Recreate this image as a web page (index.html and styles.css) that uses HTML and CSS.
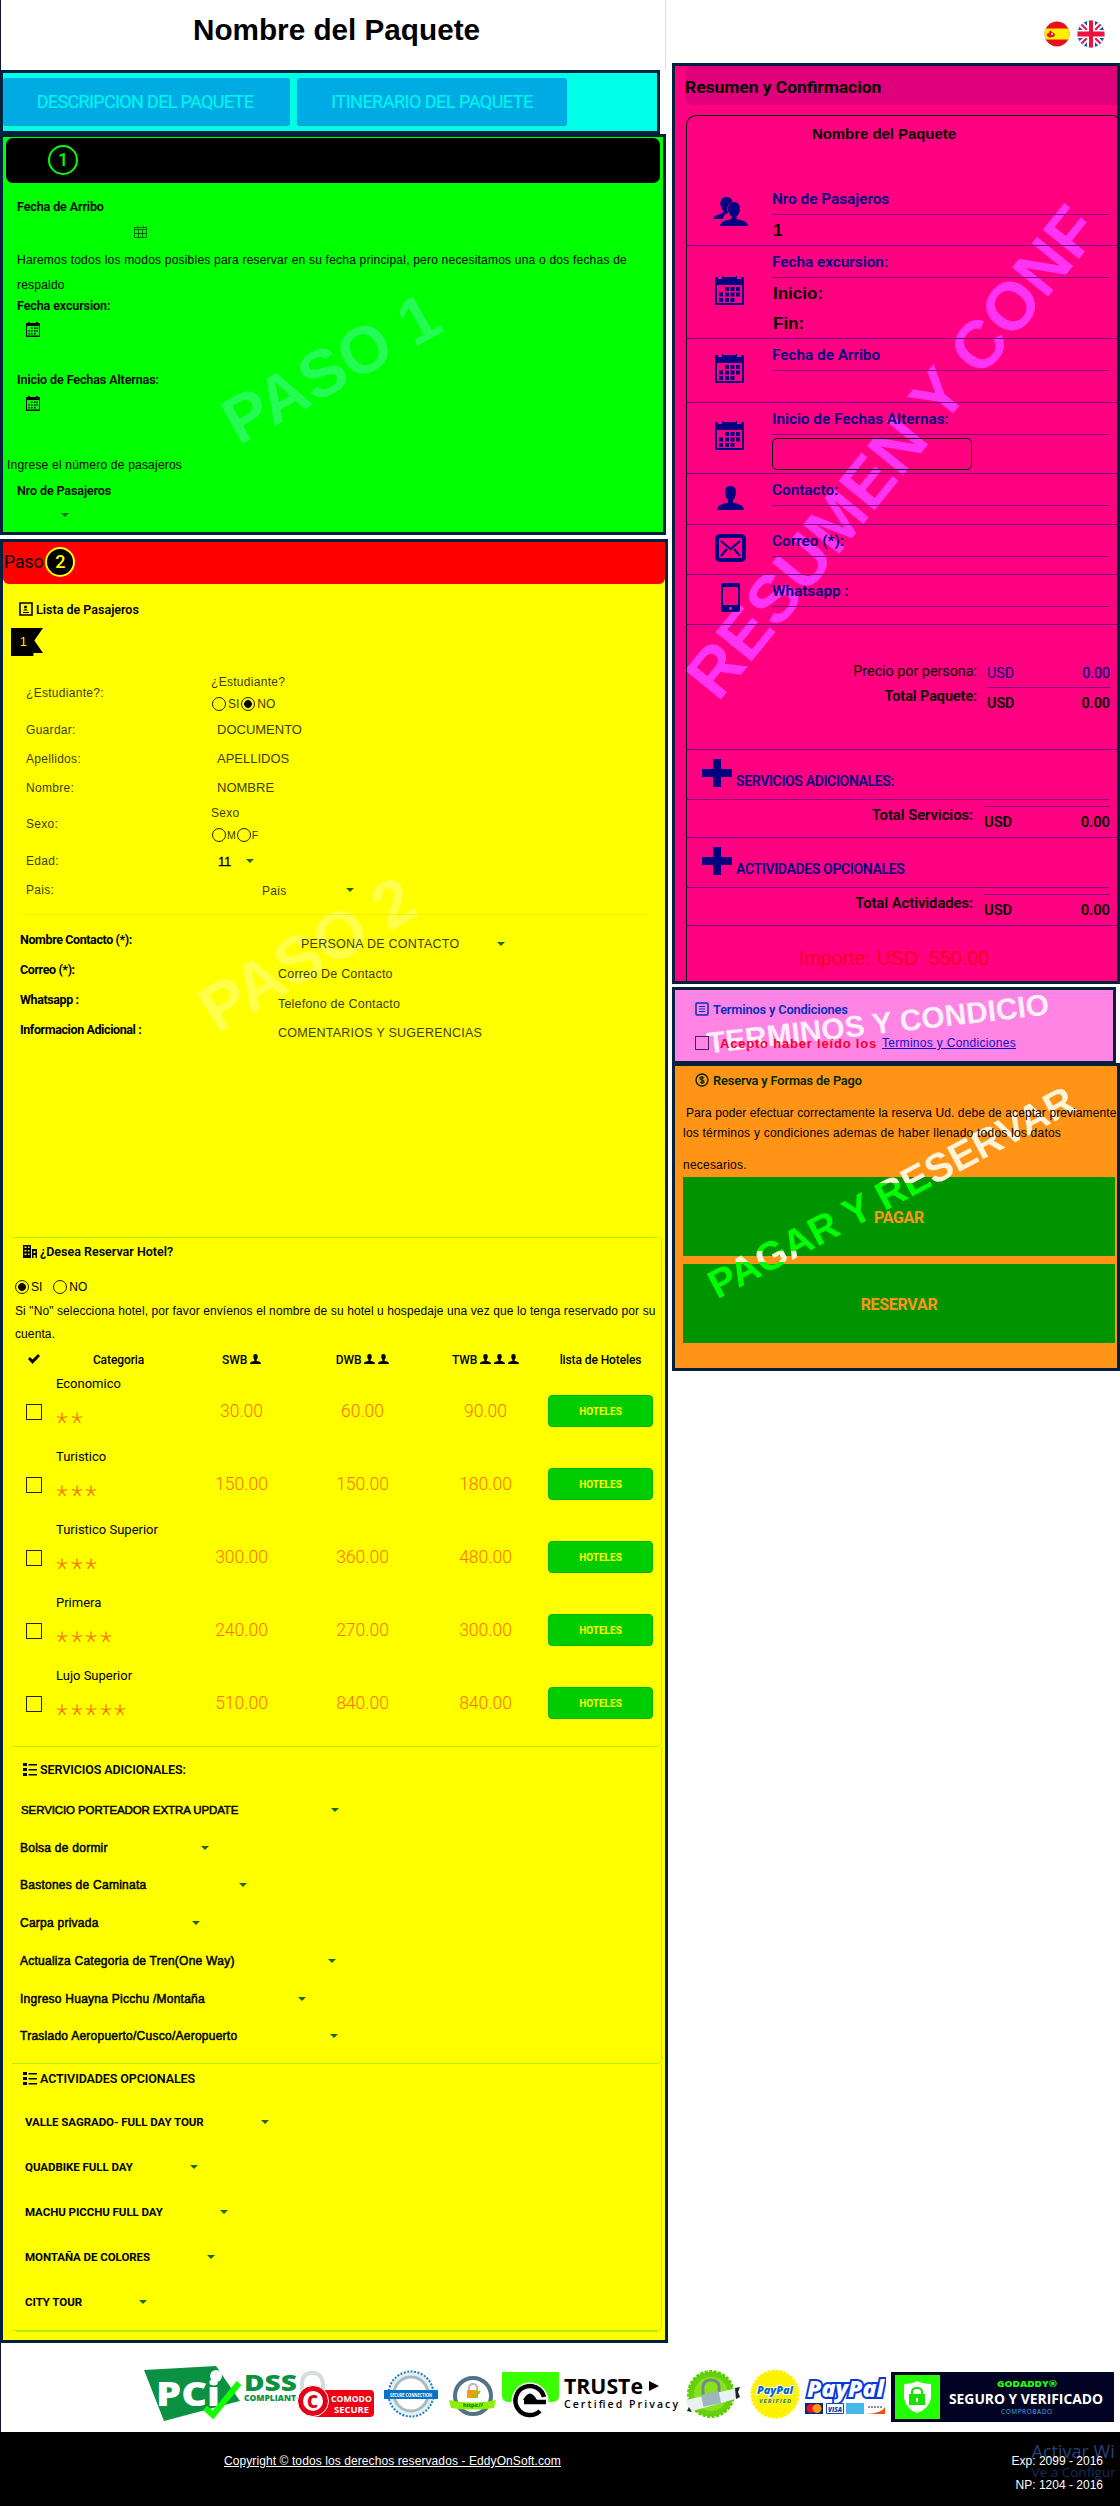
FILE: index.html
```html
<!DOCTYPE html>
<html lang="es">
<head>
<meta charset="utf-8">
<title>Nombre del Paquete</title>
<link rel="stylesheet" href="styles.css">
</head>
<body>
<svg class="sprite" width="0" height="0">
  <defs>
    <symbol id="calendar" viewBox="0 0 29 29"><path d="M0 1h3v2h4V0h1v1h13V0h1v3h4V1h3v28H0zM2 9v18h25V9z" fill-rule="evenodd"/><path d="M10 11h4v4h-4zM15.500 11h4v4h-4zM21 11h4v4h-4zM4 16.500h4v4H4zM10 16.500h4v4h-4zM15.500 16.500h4v4h-4zM21 16.500h4v4h-4zM4 22h4v4H4zM10 22h4v4h-4zM15.500 22h4v4h-4z"/></symbol>
    <symbol id="calendar-s" viewBox="0 0 14 15"><path d="M0 1h2V0h2v1h6V0h2v1h2v14H0zM1 4v9.500h12V4z" fill-rule="evenodd"/><path d="M5 5.500h1.500V7H5zM8 5.500h1.500V7H8zM10.500 5.500H12V7h-1.500zM2.500 8.200H4v1.500H2.500zM5 8.200h1.500v1.500H5zM8 8.200h1.500v1.500H8zM10.500 8.200H12v1.500h-1.500zM2.500 11H4v1.500H2.500zM5 11h1.500v1.500H5zM8 11h1.500v1.500H8z"/></symbol>
    <symbol id="person" viewBox="0 0 27 24"><path d="M13.500 0c3.500 0 5.500 2 5.500 6 0 4-1.600 6.500-3 8v2.500c4 1.500 11 2 11 7.500H0c0-5.500 7-6 11-7.500V14c-1.400-1.500-3-4-3-8 0-4 2-6 5.500-6z"/></symbol>
    <symbol id="star" viewBox="0 0 12 12"><path d="M6 6V.5M6 6L.8 4.500M6 6l5.200-1.500M6 6l-3.300 4.800M6 6l3.300 4.800" fill="none" stroke="currentColor" stroke-width="1.300"/></symbol>
    <symbol id="list" viewBox="0 0 14 13"><path d="M0 0h4v3H0zM0 5h4v3H0zM0 10h4v3H0zM5.500 1H14v1.500H5.500zM5.500 6H14v1.500H5.500zM5.500 11H14v1.500H5.500z"/></symbol>
    <symbol id="plus" viewBox="0 0 30 28"><path d="M11 0h8v10h11v8H19v10h-8V18H0v-8h11z"/></symbol>
  </defs>
</svg>

<div class="page">
  <div class="left">
    <h1 class="title">Nombre del Paquete</h1>
    <nav class="tabs">
      <a class="tab tab-desc">DESCRIPCION DEL PAQUETE</a>
      <a class="tab tab-itin">ITINERARIO DEL PAQUETE</a>
    </nav>

    <section class="step1">
      <div class="mark mark-1">PASO 1</div>
      <header class="step1-head"><span class="num">1</span></header>
      <div class="line t13"><b class="label">Fecha de Arribo</b></div>
      <div class="line t5"><svg class="cal-thin" width="13" height="13" viewBox="0 0 13 13"><path d="M.5 2.500h12v10H.5zM.5 4.500h12M4.500 4.500v8M8.500 4.500v8M3.500.500v3M9.500.500v3M.5 8.500h12" fill="none" stroke="#040" stroke-width=".8"/></svg></div>
      <div class="line t9"><span class="note">Haremos todos los modos posibles para reservar en su fecha principal, pero necesitamos una o dos fechas de</span></div>
      <div class="line t5"><span class="note">respaldo</span></div>
      <div class="line"><b class="label">Fecha excursion:</b></div>
      <div class="line t4 ind"><svg width="14" height="15"><use href="#calendar-s"/></svg></div>
      <div class="line t30"><b class="label">Inicio de Fechas Alternas:</b></div>
      <div class="line t4 ind"><svg width="14" height="15"><use href="#calendar-s"/></svg></div>
      <div class="line t41 out"><span class="note">Ingrese el número de pasajeros</span></div>
      <div class="line t5"><b class="label">Nro de Pasajeros</b></div>
      <div class="line t5"><i class="caret caret-n"></i></div>
    </section>

    <section class="step2">
      <div class="mark mark-2">PASO 2</div>
      <header class="step2-head">Paso<span class="num num-2">2</span></header>
      <h2 class="sub sub-list"><svg width="14" height="14" viewBox="0 0 14 14"><path d="M1 1h12v12H1z" fill="none" stroke="#000" stroke-width="1.600"/><circle cx="6.500" cy="5" r="1.500"/><path d="M4 8.500q2.500-3 5 0zM4 10h6v1H4z"/></svg>Lista de Pasajeros</h2>
      <div class="flag"><span>1</span></div>
      <div class="form">
        <div class="row tall"><label>¿Estudiante?:</label><div><p>¿Estudiante?</p><p class="radios"><i class="radio"></i>SI<i class="radio on"></i>NO</p></div></div>
        <div class="row"><label>Guardar:</label><span class="field">DOCUMENTO</span></div>
        <div class="row"><label>Apellidos:</label><span class="field">APELLIDOS</span></div>
        <div class="row"><label>Nombre:</label><span class="field">NOMBRE</span></div>
        <div class="row tall"><label>Sexo:</label><div><p>Sexo</p><p class="radios small"><i class="radio"></i>M<i class="radio"></i>F</p></div></div>
        <div class="row"><label>Edad:</label><span class="age">11</span><i class="caret"></i></div>
        <div class="row"><label>Pais:</label><span class="country">Pais</span><i class="caret"></i></div>
      </div>
      <div class="contact">
        <div class="crow"><b>Nombre Contacto (*):</b><span class="in1">PERSONA DE CONTACTO</span><i class="caret"></i></div>
        <div class="crow"><b>Correo (*):</b><span class="in2">Correo De Contacto</span></div>
        <div class="crow"><b>Whatsapp :</b><span class="in2">Telefono de Contacto</span></div>
        <div class="crow"><b>Informacion Adicional :</b><span class="in3">COMENTARIOS Y SUGERENCIAS</span></div>
      </div>

      <div class="hotel">
        <h2 class="sub"><svg width="14" height="13" viewBox="0 0 14 13"><path d="M0 0h8v13H0zM1.500 1.500v1.500h2V1.500zm3.500 0v1.500h1.500V1.500zM1.500 5v1.500h2V5zM5 5v1.500h1.500V5zM1.500 8.500V10h2V8.500zm3.500 0V10h1.500V8.500zM9 4h5v9h-1.500v-3h-2v3H9zm1.500 2v2h2V6z" fill-rule="evenodd"/></svg>¿Desea Reservar Hotel?</h2>
        <p class="choice"><i class="radio on"></i>SI<i class="radio second"></i>NO</p>
        <p class="note hotel-note">Si "No" selecciona hotel, por favor envíenos el nombre de su hotel u hospedaje una vez que lo tenga reservado por su<br>cuenta.</p>
        <div class="hrow hhead">
          <span><svg width="12" height="10" viewBox="0 0 12 10"><path d="M0 5l2-2 2.500 2.500L10 0l2 2-7.500 8z"/></svg></span><span class="cat">Categoria</span>
          <span>SWB <svg width="11" height="10"><use href="#person"/></svg></span>
          <span>DWB <svg width="11" height="10"><use href="#person"/></svg> <svg width="11" height="10"><use href="#person"/></svg></span>
          <span>TWB <svg width="11" height="10"><use href="#person"/></svg> <svg width="11" height="10"><use href="#person"/></svg> <svg width="11" height="10"><use href="#person"/></svg></span>
          <span>lista de Hoteles</span>
        </div>
        <div class="hrow"><i class="check"></i><div class="name">Economico<p><svg><use href="#star"/></svg><svg><use href="#star"/></svg></p></div><em>30.00</em><em>60.00</em><em>90.00</em><a class="btn">HOTELES</a></div>
        <div class="hrow"><i class="check"></i><div class="name">Turistico<p><svg><use href="#star"/></svg><svg><use href="#star"/></svg><svg><use href="#star"/></svg></p></div><em>150.00</em><em>150.00</em><em>180.00</em><a class="btn">HOTELES</a></div>
        <div class="hrow"><i class="check"></i><div class="name">Turistico Superior<p><svg><use href="#star"/></svg><svg><use href="#star"/></svg><svg><use href="#star"/></svg></p></div><em>300.00</em><em>360.00</em><em>480.00</em><a class="btn">HOTELES</a></div>
        <div class="hrow"><i class="check"></i><div class="name">Primera<p><svg><use href="#star"/></svg><svg><use href="#star"/></svg><svg><use href="#star"/></svg><svg><use href="#star"/></svg></p></div><em>240.00</em><em>270.00</em><em>300.00</em><a class="btn">HOTELES</a></div>
        <div class="hrow"><i class="check"></i><div class="name">Lujo Superior<p><svg><use href="#star"/></svg><svg><use href="#star"/></svg><svg><use href="#star"/></svg><svg><use href="#star"/></svg><svg><use href="#star"/></svg></p></div><em>510.00</em><em>840.00</em><em>840.00</em><a class="btn">HOTELES</a></div>
      </div>

      <div class="services">
        <h2 class="sub"><svg width="14" height="13"><use href="#list"/></svg>SERVICIOS ADICIONALES:</h2>
        <div class="srow caps"><span>SERVICIO PORTEADOR EXTRA UPDATE</span><i class="caret"></i></div>
        <div class="srow"><span>Bolsa de dormir</span><i class="caret"></i></div>
        <div class="srow"><span>Bastones de Caminata</span><i class="caret"></i></div>
        <div class="srow"><span>Carpa privada</span><i class="caret"></i></div>
        <div class="srow"><span>Actualiza Categoria de Tren(One Way)</span><i class="caret"></i></div>
        <div class="srow"><span>Ingreso Huayna Picchu /Montaña</span><i class="caret"></i></div>
        <div class="srow"><span>Traslado Aeropuerto/Cusco/Aeropuerto</span><i class="caret"></i></div>
      </div>
      <div class="activities">
        <h2 class="sub"><svg width="14" height="13"><use href="#list"/></svg>ACTIVIDADES OPCIONALES</h2>
        <div class="arow"><span>VALLE SAGRADO- FULL DAY TOUR</span><i class="caret"></i></div>
        <div class="arow"><span>QUADBIKE FULL DAY</span><i class="caret"></i></div>
        <div class="arow"><span>MACHU PICCHU FULL DAY</span><i class="caret"></i></div>
        <div class="arow"><span>MONTAÑA DE COLORES</span><i class="caret"></i></div>
        <div class="arow"><span>CITY TOUR</span><i class="caret"></i></div>
      </div>
    </section>
  </div>

  <div class="right">
    <div class="langs">
      <svg width="26" height="26" viewBox="0 0 26 26"><clipPath id="c1"><circle cx="13" cy="13" r="12.500"/></clipPath><g clip-path="url(#c1)"><path fill="#e8101c" d="M0 0h26v26H0z"/><path fill="#fff000" d="M0 7.500h26v11H0z"/><path fill="#e8101c" d="M3 15q-1-3 2-3l1-3 2 2 3 2-1 3H7l-1 1z"/><circle cx="8" cy="13" r="1" fill="#fff"/></g></svg>
      <svg width="28" height="28" viewBox="0 0 28 28"><clipPath id="c2"><circle cx="14" cy="14" r="13.500"/></clipPath><g clip-path="url(#c2)"><path fill="#1757b8" d="M0 0h28v28H0z"/><path d="M0 0l28 28M28 0L0 28" stroke="#fff" stroke-width="6"/><path d="M0 0l28 28M28 0L0 28" stroke="#f0103c" stroke-width="2"/><path d="M14 0v28M0 14h28" stroke="#fff" stroke-width="8"/><path d="M14 0v28" stroke="#f0103c" stroke-width="4"/><path d="M0 14h28" stroke="#f0103c" stroke-width="5"/></g></svg>
    </div>

    <section class="summary">
      <div class="mark mark-3">RESUMEN Y CONF</div>
      <h2 class="sum-head">Resumen y Confirmacion</h2>
      <div class="box">
        <h3>Nombre del Paquete</h3>
        <div class="item i1"><svg class="ico" width="35" height="30" viewBox="0 0 35 30"><path d="M13 0c4 0 6 2 6.500 5-5 1-6 6-4.500 11-3 1-4 2-5 6H0c1-4 6-4 9-6 2-1 1-3 0-4C6 7 7 0 13 0z"/><path d="M21 5c4 0 6 3 6 7 0 3-1.500 6-3.500 7.500V22c4 1 11 2 11.500 7H7c.5-5 7-6 11.500-7v-2.500C16.500 18 15 15 15 12c0-4 2-7 6-7z"/></svg><div class="info"><b>Nro de Pasajeros</b><strong>1</strong></div></div>
        <div class="item i2"><svg class="ico" width="29" height="29"><use href="#calendar"/></svg><div class="info"><b>Fecha excursion:</b><strong>Inicio:</strong><strong>Fin:</strong></div></div>
        <div class="item i3"><svg class="ico" width="29" height="29"><use href="#calendar"/></svg><div class="info"><b>Fecha de Arribo</b></div></div>
        <div class="item i4"><svg class="ico" width="29" height="29"><use href="#calendar"/></svg><div class="info"><b>Inicio de Fechas Alternas:</b><div class="input"></div></div></div>
        <div class="item i5"><svg class="ico" width="27" height="24"><use href="#person"/></svg><div class="info"><b>Contacto:</b></div></div>
        <div class="item i6"><svg class="ico" width="31" height="28" viewBox="0 0 31 28"><rect x="2" y="2" width="27" height="24" rx="3" fill="none" stroke="currentColor" stroke-width="4"/><path d="M6 7l9.500 8L25 7M6 22l6-7M25 22l-6-7" fill="none" stroke="currentColor" stroke-width="2.200"/></svg><div class="info"><b>Correo (*):</b></div></div>
        <div class="item i7"><svg class="ico" width="19" height="29" viewBox="0 0 19 29"><path fill-rule="evenodd" d="M2 0h15q2 0 2 2v25q0 2-2 2H2q-2 0-2-2V2q0-2 2-2zm0 4v18h15V4zm6 20v3h3v-3z"/></svg><div class="info"><b>Whatsapp :</b></div></div>
        <div class="price">
          <div class="names"><span>Precio por persona:</span><b>Total Paquete:</b></div>
          <div class="vals"><p class="unit"><span>USD</span><span>0.00</span></p><p class="total"><b>USD</b><b>0.00</b></p></div>
        </div>
        <h4 class="extra"><svg width="30" height="28"><use href="#plus"/></svg>SERVICIOS ADICIONALES:</h4>
        <div class="sum"><b class="sname">Total Servicios:</b><p class="total"><b>USD</b><b>0.00</b></p></div>
        <h4 class="extra"><svg width="30" height="28"><use href="#plus"/></svg>ACTIVIDADES OPCIONALES</h4>
        <div class="sum"><b class="sname">Total Actividades:</b><p class="total"><b>USD</b><b>0.00</b></p></div>
        <div class="amount">Importe: USD&nbsp; 550.00</div>
      </div>
    </section>

    <section class="terms">
      <div class="mark mark-4">TERMINOS Y CONDICIO</div>
      <h2><svg width="14" height="14" viewBox="0 0 14 14"><rect x="1" y="1" width="12" height="12" rx="1" fill="none" stroke="#0030c0" stroke-width="1.500"/><path d="M4 4.500h6M4 7h6M4 9.500h6" stroke="#0030c0"/></svg>Terminos y Condiciones</h2>
      <div class="accept"><i class="check"></i><b>Acepto haber leído los</b><a>Terminos y Condiciones</a></div>
    </section>

    <section class="pay">
      <h2><svg width="14" height="14" viewBox="0 0 14 14"><circle cx="7" cy="7" r="6" fill="none" stroke="#032800" stroke-width="1.400"/><path d="M9 5q-4-2-4 .5c0 2 4 1 4 3Q9 11 5 9M7 3v8" fill="none" stroke="#032800" stroke-width="1.200"/></svg>Reserva y Formas de Pago</h2>
      <p class="pay-text"><span class="pt1">Para poder efectuar correctamente la reserva Ud. debe de aceptar previamente</span><span class="pt2">los términos y condiciones ademas de haber llenado todos los datos</span><span class="pt3">necesarios.</span></p>
      <a class="big">PAGAR</a>
      <a class="big">RESERVAR</a>
      <div class="mark mark-5">PAGAR Y RESERVAR</div>
    </section>
  </div>
</div>

<div class="badges">
  <svg width="155" height="56" viewBox="0 0 155 56"><path fill="#0a9142" d="M0 5L72 1l24 35-8 2-68 18z"/><text x="12" y="41" font-size="33" font-weight="900" fill="#fff" textLength="64" lengthAdjust="spacingAndGlyphs">PCi</text><circle cx="72" cy="11" r="6" fill="#fff"/><path d="M61 43l8 7 26-32" fill="none" stroke="#1f0" stroke-width="6"/><text x="100" y="26" font-size="23" font-weight="900" fill="#0a9142" textLength="53" lengthAdjust="spacingAndGlyphs">DSS</text><text x="100" y="36" font-size="8" font-weight="900" fill="#0a9142" textLength="52" lengthAdjust="spacingAndGlyphs">COMPLIANT</text></svg>
  <svg class="b2" width="78" height="52" viewBox="0 0 78 52"><path d="M5 24V13Q5 2 15 2t11 11v11" fill="none" stroke="#d3dcde" stroke-width="4"/><rect x="15" y="19" width="62" height="27" rx="4" fill="#f00014"/><circle cx="16" cy="30" r="15.500" fill="#e00018" stroke="#fff"/><circle cx="16" cy="30" r="10" fill="#fff"/><text x="10" y="36.500" font-size="17" font-weight="800" fill="#e00018">C</text><text x="34" y="31" font-size="8" font-weight="700" fill="#fff" textLength="41" lengthAdjust="spacingAndGlyphs">COMODO</text><text x="37" y="42" font-size="9" font-weight="700" fill="#fff" textLength="35" lengthAdjust="spacingAndGlyphs">SECURE</text></svg>
  <svg class="b3" width="54" height="48" viewBox="0 0 54 48"><circle cx="27" cy="24" r="22.500" fill="#e6eef2" stroke="#1b80c8" stroke-width="2" stroke-dasharray="2 1.500"/><circle cx="27" cy="24" r="17" fill="#fff" stroke="#a9bcc4" stroke-width="3"/><rect y="20" width="54" height="9" fill="#0a72c4"/><text x="6" y="26.500" font-size="5.500" font-weight="700" fill="#fff" textLength="42" lengthAdjust="spacingAndGlyphs">SECURE CONNECTION</text></svg>
  <svg class="b4" width="48" height="40" viewBox="0 0 48 40"><circle cx="24" cy="20" r="18" fill="#fff" stroke="#527487" stroke-width="4"/><path d="M20 15v-3q0-4 4-4t4 4v3" fill="none" stroke="#bbb" stroke-width="2"/><rect x="18" y="14" width="11" height="8" fill="#ff9a10"/><path d="M23 18l3 3 5-6" stroke="#7ad010" fill="none" stroke-width="2"/><path fill="#8cf000" d="M0 24q24 5 47 0l-2 8q-22 3-43 0z"/><text x="14" y="31" font-size="6" font-weight="700" fill="#062" textLength="20" lengthAdjust="spacingAndGlyphs">https://</text></svg>
  <svg class="b5" width="177" height="48" viewBox="0 0 177 48"><path fill="#3bff00" d="M0 0h57v24q0 6-8 6H8q-8 0-8-6z"/><circle cx="28" cy="29" r="16" fill="#fff" stroke="#fff" stroke-width="5"/><path d="M42 25A14.500 14.500 0 1 0 38 39M22 30h22" fill="none" stroke="#000" stroke-width="4.500"/><path d="M21 28q7-13 14 0z"/><text x="62" y="22" font-size="21" font-weight="700" textLength="79" lengthAdjust="spacingAndGlyphs">TRUSTe</text><path d="M147 9l10 5-10 5z"/><text x="62" y="36" font-size="10.500" font-weight="600" textLength="114">Certified Privacy</text></svg>
  <svg class="b6" width="56" height="50" viewBox="0 0 56 50"><circle cx="26" cy="25" r="22.500" fill="#69cd10" stroke="#5ad000" stroke-width="3" stroke-dasharray="3 1.500"/><circle cx="26" cy="25" r="17" fill="#86e31c"/><path d="M18 26V17q1-6 8-6t8 6v9" fill="none" stroke="#788" stroke-width="3"/><path d="M1 31l51-12 2 10-50 14z" fill="#e9f1f1"/><rect x="17" y="24" width="18" height="12" fill="#9eb6be" transform="rotate(-12 26 30)"/><path d="M50 19l5-1-2 5 2 5-4 2zM4 38l3 5-5-1z" fill="#222"/></svg>
  <svg class="b7" width="52" height="50" viewBox="0 0 52 50"><circle cx="26" cy="25" r="23" fill="#fff200" stroke="#fff200" stroke-width="3" stroke-dasharray="3 1"/><text x="8" y="25" font-size="11" font-weight="900" font-style="italic" fill="#0968c8" stroke="#fff" stroke-width="2" paint-order="stroke" textLength="36" lengthAdjust="spacingAndGlyphs">PayPal</text><text x="10" y="34" font-size="6" font-weight="700" font-style="italic" fill="#2a70b0" textLength="32">VERIFIED</text></svg>
  <svg class="b8" width="81" height="42" viewBox="0 0 81 42"><text x="2" y="20" font-size="23" font-weight="900" font-style="italic" fill="#fff" stroke="#0738d8" stroke-width="4" paint-order="stroke" textLength="77" lengthAdjust="spacingAndGlyphs">PayPal</text><path fill="#002a7c" d="M0 26h18v11H0z"/><circle cx="6" cy="31.500" r="4.500" fill="#f01020"/><circle cx="12" cy="31.500" r="4.500" fill="#ff9a10"/><path fill="#fff" stroke="#124c9c" d="M21.500 26.500h17v10h-17z"/><text x="23" y="34.500" font-size="7" font-weight="900" font-style="italic" fill="#0a38a8" textLength="14" lengthAdjust="spacingAndGlyphs">VISA</text><path fill="#44b9e8" d="M41 26h18v11H41z"/><path fill="#fff" d="M62 26h18v11H62z"/><path fill="#f05010" d="M62 37q15-1 18-7v7z"/><path d="M63 30h14" stroke="#222" stroke-dasharray="2 1"/></svg>
  <svg class="b9" width="223" height="50" viewBox="0 0 223 50"><path fill="#020224" d="M0 0h223v50H0z"/><path fill="#2f0" d="M4 3h45v44H4z"/><path fill="#fff" d="M13 12q8 0 13-3 6 3 14 3v14q-2 11-14 15-11-4-13-15z"/><rect x="18" y="22" width="16" height="11" fill="#1ce000"/><path d="M21 23v-3q0-4 5-4t5 4v3" fill="none" stroke="#1ce000" stroke-width="2"/><path d="M26 26v4" stroke="#fff" stroke-width="2"/><text x="106" y="15" font-size="9" font-weight="800" fill="#1eff00" textLength="60" lengthAdjust="spacingAndGlyphs">GODADDY®</text><text x="58" y="32" font-size="14.500" font-weight="700" fill="#fff" textLength="154" lengthAdjust="spacingAndGlyphs">SEGURO Y VERIFICADO</text><text x="110" y="42" font-size="6.500" fill="#3bb8e0" textLength="51">COMPROBADO</text></svg>
</div>

<footer>
  <a>Copyright © todos los derechos reservados - EddyOnSoft.com</a>
  <div class="codes"><div class="activate">Activar Wi<small>Ve a Configur</small></div><p>Exp: 2099 - 2016</p><p>NP: 1204 - 2016</p></div>
</footer>
</body>
</html>
```
FILE: styles.css
```css
* { box-sizing: border-box; }
body, p, h1, h2, h3, h4 { margin: 0; }
body { width: 1120px; background: #fff; color: #000; font-family: "Liberation Sans", Arial, sans-serif; overflow-x: hidden; }
.sprite { position: absolute; }
.page { display: flex; gap: 4px; height: 2343px; }
.left { width: 668px; }
.right { width: 448px; }
section { position: relative; border: 3px solid #03213d; }
section > * { position: relative; }
svg { flex: none; }
h2, h4, .label, .tab, .num, .step2-head, .contact b, .hrow, .arow, .info b, .price, .sum, .btn, .big {
  font-family: Roboto, "Open Sans", sans-serif;
}
.mark { position: absolute; font-weight: 700; white-space: nowrap; line-height: 1; transform: translate(-50%, -50%) rotate(var(--turn)); }
.caret { border: 4px solid transparent; border-top: 4px solid #1d6800; border-bottom: 0; width: 8px; height: 4px; }

.title { width: 666px; height: 70px; padding-left: 192px; border-left: 1px solid #113; border-right: 1px solid #b9eded; font-size: 29.7px; line-height: 60px; white-space: nowrap; }
.tabs { display: flex; gap: 7px; width: 660px; height: 64px; padding-top: 5px; border: 3px solid #03213d; background: #00ffe6; }
.tab { height: 47px; border-radius: 3px; background: #00abe4; box-shadow: 0 1px 1px #00a0b0; color: #00f4ec; font-size: 18px; line-height: 48px; text-align: center; white-space: nowrap; -webkit-text-stroke: .2px #00f4ec; }
.tab-desc { width: 287px; padding-right: 3px; letter-spacing: -.65px; }
.tab-itin { width: 270px; letter-spacing: -.5px; }

.step1 { width: 666px; height: 401px; padding: 1px 3px 0; background: #0f0; }
.step1-head { height: 45px; padding: 7px 0 0 42px; border-radius: 7px; background: #000; }
.num { display: block; width: 30px; height: 30px; border: 2px solid #0f0; border-radius: 50%; color: #0f0; font-size: 18px; font-weight: 500; line-height: 26px; text-align: center; }
.line { display: flex; align-items: center; height: 20px; padding-left: 11px; white-space: nowrap; }
.line.ind { padding-left: 20px; }
.line.out { padding-left: 1px; }
.t4 { margin-top: 4px; }
.t5 { margin-top: 5px; }
.t9 { margin-top: 9px; }
.t13 { margin-top: 13px; }
.t30 { margin-top: 30px; }
.t41 { margin-top: 42px; }
.label { font-size: 12.5px; font-weight: 600; letter-spacing: -.1px; }
.note { font-size: 12px; letter-spacing: .21px; }
.cal-thin { margin-left: 117px; }
.caret-n { margin-left: 44px; }
.mark-1 { left: 328px; top: 231px; color: #24fb54; font-size: 66px; --turn: -29.3deg; }

.step2 { height: 1804px; margin-top: 4px; background: #ff0; }
.step2-head { display: flex; align-items: center; height: 42px; padding: 0 0 3px 1px; border-radius: 0 0 6px 6px; background: #f00; font-size: 17.5px; }
.num-2 { margin-left: 2px; border-color: #ff0; background: #000; color: #ff0; line-height: 25px; }
.sub { display: flex; align-items: center; gap: 3px; height: 20px; padding-left: 20px; font-size: 12.5px; font-weight: 600; white-space: nowrap; }
.sub-list { margin-top: 15px; padding-left: 16px; }
.flag { width: 32px; height: 28px; margin: 9px 0 15px 8px; background: #000; clip-path: polygon(0 0, 100% 0, 73% 45%, 100% 89%, 70% 89%, 70% 100%, 0 100%); color: #ff0; font-size: 12px; line-height: 28px; }
.flag span { margin-left: 9px; }
.form, .contact { color: #3e3e00; font-size: 12px; white-space: nowrap; }
.form { height: 244px; margin: 0 17px 0 16px; border-bottom: 1px solid #f2f200; padding-left: 7px; letter-spacing: .3px; }
.row { display: flex; align-items: center; height: 29px; }
.row.tall { height: 44px; }
.row label { width: 185px; }
.row p { height: 22px; line-height: 22px; }
.radios { display: flex; align-items: center; gap: 2px; padding-left: 1px; letter-spacing: 0; }
.radio { display: block; width: 14px; height: 14px; border: 1px solid #220; border-radius: 50%; }
.radio.on { background: radial-gradient(circle, #000 3.500px, transparent 4.200px); }
.small { gap: 1px; font-size: 10.5px; }
.field { margin-left: 6px; font-size: 13px; letter-spacing: 0; }
.age { margin: 2px 15px 0 7px; color: #000; font-size: 13px; letter-spacing: -.3px; -webkit-text-stroke: .3px #000; }
.country { width: 84px; margin: 3px 0 0 51px; }
.contact { height: 323px; margin: 0 3px 0 9px; padding: 9px 0 0 8px; border-bottom: 1px solid #b4ee00; border-radius: 0 0 5px 0; font-size: 12.5px; }
.crow { display: flex; align-items: center; height: 30px; letter-spacing: .2px; }
.crow b { width: 258px; color: #000; font-size: 12.5px; font-weight: 700; letter-spacing: -.4px; }
.in1 { width: 196px; margin: 10px 0 0 23px; letter-spacing: .25px; }
.crow .caret { margin-top: 10px; }
.in2 { margin-top: 10px; }
.in3 { margin-top: 7px; letter-spacing: .25px; }
.mark-2 { left: 304px; top: 412px; color: #ffff4c; font-size: 66px; --turn: -30.6deg; }

.hotel { height: 509px; margin: 0 3px 0 9px; padding: 3px 0 0; border: solid #b4ee00; border-width: 0 1px 1px 0; border-radius: 0 0 5px 0; }
.hotel .sub, .services .sub, .activities .sub { padding-left: 11px; }
.choice { display: flex; align-items: center; gap: 2px; height: 20px; margin: 16px 0 0 3px; font-size: 12px; }
.second { margin-left: 9px; }
.hotel-note { height: 46px; margin: 3px 0 0 3px; line-height: 23px; white-space: nowrap; letter-spacing: .1px; }
.hrow { display: grid; grid-template-columns: 44px 125px 121px 121px 125px 105px; height: 73.1px; font-size: 14px; }
.hhead { height: 28px; align-items: center; text-align: center; font-size: 12px; font-weight: 500; letter-spacing: -.1px; white-space: nowrap; }
.hrow .check { margin: 30px 0 0 14px; }
.check { display: block; width: 16px; height: 16px; border: 1px solid #221; }
.name { line-height: 20px; font-size: 13px; white-space: nowrap; }
.name p { display: flex; gap: 2.600px; margin-top: 18px; color: #ff7000; }
.name svg { width: 12px; height: 12px; }
.hrow em { color: #ff7000; font-size: 17.5px; font-style: normal; font-weight: 300; line-height: 74px; text-align: center; }
.btn { height: 32px; margin-top: 21px; border: 1px solid #00b400; border-radius: 4px; background: #0c0; color: #ff0; font-size: 10px; font-weight: 700; line-height: 31px; text-align: center; }

.services { height: 317px; margin: 0 3px 0 9px; padding: 12px 0 0 0; border: solid #b4ee00; border-width: 0 1px 1px 0; border-radius: 0 0 5px 0; }
.srow, .arow { display: flex; align-items: center; white-space: nowrap; }
.srow { height: 37.75px; margin-left: 8px; font-size: 12px; letter-spacing: .25px; -webkit-text-stroke: .5px #000; }
.srow.caps { margin-left: 9px; font-size: 11.5px; letter-spacing: -.1px; }
.services .sub { margin-bottom: 12px; }
.srow .caret { margin-left: 93px; }
.activities { height: 267px; margin: 0 3px 0 9px; padding-top: 4px; border: solid #b4ee00; border-width: 0 1px 1px 0; border-radius: 0 0 5px 0; box-shadow: 0 5px 0 -4px #b4ee00; }
.activities .sub { margin-bottom: 11px; }
.activities .sub, .services .sub { letter-spacing: -.1px; }
.arow { height: 45.2px; margin-left: 13px; font-size: 11.5px; font-weight: 700; letter-spacing: -.05px; }
.arow .caret { margin-left: 57px; }

.langs { display: flex; align-items: center; gap: 7px; height: 63px; padding: 5px 0 0 372px; }
.summary { height: 921px; background: #ff0080; overflow: hidden; }
.sum-head { height: 39px; margin-left: 10px; border-radius: 7px 0 0 7px; background: #e0007c; font-size: 17.4px; font-weight: 700; line-height: 42px; white-space: nowrap; }
.mark-3 { left: 217px; top: 386px; color: #ff33f4; font-size: 67.500px; --turn: -50.9deg; }
.box { width: 433px; height: 880px; margin: 10px 0 0 11px; border: 1.500px solid #001; border-bottom: 0; border-radius: 10px 6px 0 0; color: #000080; }
.box h3 { height: 65px; padding-left: 125px; color: #000; font-size: 14.9px; line-height: 37px; }
.item { display: flex; border-bottom: 1px solid #6a0088; }
.ico, .extra svg { color: #000080; fill: currentColor; }
.info { width: 337px; margin-left: auto; margin-right: 9px; }
.info b { display: block; height: 32px; border-bottom: 1px solid #7a0088; font-size: 15.3px; font-weight: 600; line-height: 33px; white-space: nowrap; }
.info strong { display: block; height: 30px; padding-left: 1px; color: #000; font-size: 17px; line-height: 32px; }
.i1 { height: 65px; padding-left: 26px; }
.i1 .info b { height: 34px; line-height: 37px; }
.i1 .ico { margin-top: 16px; }
.i2 { height: 93px; padding-left: 28px; }
.i2 .ico { margin-top: 30px; }
.i3 { height: 64px; padding-left: 28px; }
.i3 .ico { margin-top: 15px; }
.i4 { height: 71px; padding-left: 28px; }
.i4 .ico { margin-top: 18px; }
.input { width: 200px; height: 32px; margin-top: 3px; border: 1px solid #001; border-radius: 5px; }
.i5 { height: 51px; padding-left: 30px; }
.i5 .ico { margin-top: 12px; }
.i6 { height: 50px; padding-left: 28px; }
.i6 .ico { margin-top: 9px; }
.i7 { height: 50px; padding-left: 34px; }
.i7 .ico { margin-top: 8px; }
.price { display: flex; height: 125px; padding: 34px 0 0 0; border-bottom: 1px solid #6a0088; font-size: 14.3px; color: #000; }
.names { display: flex; flex-direction: column; width: 290px; text-align: right; line-height: 25px; }
.vals { width: 123px; margin-left: 10px; }
.unit, .total { display: flex; justify-content: space-between; line-height: 28px; }
.unit { height: 29px; border-bottom: 1px solid #7a0088; color: #000080; }
.unit span + span { -webkit-text-stroke: .3px #000080; }
.price b, .sum b { font-weight: 600; }
.vals .total { line-height: 30px; }
.extra { display: flex; align-items: flex-start; gap: 4px; height: 50px; margin-right: 9px; padding: 9px 0 0 15px; border-bottom: 1px solid #7a0088; font-size: 14px; font-weight: 600; line-height: 44px; letter-spacing: -.35px; white-space: nowrap; }
.sum { display: flex; height: 38px; border-bottom: 1px solid #6a0088; color: #000; font-size: 14.7px; }
.sname { width: 286px; line-height: 30px; text-align: right; }
.sum .total { width: 126px; height: 32px; margin: 6px 0 0 11px; border-top: 1px solid #7a0088; line-height: 31px; }
.amount { color: #f80020; font-size: 19.700px; line-height: 64px; padding-left: 112px; }

.terms { width: 444px; height: 77px; margin-top: 3px; background: #ff84e4; }
.terms::before { content: ""; display: block; height: 1px; margin: 3px 0 0 12px; background: #dc8cea; }
.terms h2, .pay h2 { display: flex; align-items: center; gap: 4px; height: 20px; padding-left: 20px; font-size: 12.8px; font-weight: 600; letter-spacing: -.15px; white-space: nowrap; }
.terms h2 { margin-top: 5px; color: #0030c0; }
.mark-4 { left: 203px; top: 34px; color: #fff0fc; font-size: 30px; --turn: -6.500deg; }
.accept { display: flex; align-items: center; height: 20px; margin: 14px 0 0 20px; font-size: 13px; white-space: nowrap; }
.accept .check { width: 14px; height: 14px; border-color: #426; }
.accept b { margin: 0 5px 0 11px; color: #f5002c; letter-spacing: .8px; }
.accept a { color: #0f10d0; text-decoration: underline; font-size: 12px; letter-spacing: .3px; }
.pay { height: 308px; margin-top: -1px; padding-top: 4px; background: #ff9417; overflow: hidden; }
.pay h2 { color: #032800; }
.pay-text { z-index: 2; display: flex; flex-direction: column; height: 87px; padding: 13px 0 0 8px; font-size: 12px; letter-spacing: .22px; line-height: 20px; white-space: nowrap; }
.pt1 { padding-left: 3px; letter-spacing: .09px; }
.pt3 { margin-top: 12px; }
.big { display: block; width: 432px; height: 79px; margin: 0 0 8px 8px; background: #009500; color: #ff9417; font-size: 16px; font-weight: 700; line-height: 81px; text-align: center; letter-spacing: -.3px; }
.mark-5 { left: 216px; top: 126px; font-size: 40px; --turn: -27.8deg; color: transparent; background: linear-gradient(207.8deg, #fff3d8 0 46%, #0f0 46% 76%, #fff3d8 76% 81%, #0f0 81%); -webkit-background-clip: text; background-clip: text; }

.badges { display: flex; align-items: flex-start; height: 89px; padding: 22px 0 0 143px; border-left: 1px solid #113; font-family: "Open Sans", sans-serif; }
.b2 { margin: 6px 0 0 -2px; }
.b3 { margin: 5px 0 0 9px; }
.b4 { margin: 11px 0 0 11px; }
.b5 { margin: 7px 0 0 5px; }
.b6 { margin: 4px 0 0 6px; }
.b7 { margin: 4px 0 0 8px; }
.b8 { margin: 12px 0 0 4px; }
.b9 { margin: 7px 0 0 5px; }
footer { display: flex; justify-content: space-between; height: 74px; padding: 22px 17px 0 224px; background: #000; color: #fff; font-size: 12px; line-height: 14px; }
footer a { height: 14px; color: #fff; text-decoration: underline; letter-spacing: .09px; }
.codes { position: relative; text-align: right; }
.codes p { position: relative; margin-bottom: 10px; }
.activate { position: absolute; left: 20px; top: -14px; color: #24407e; font: 400 18px/22px "Open Sans", sans-serif; text-align: left; white-space: nowrap; }
.activate small { display: block; color: #1a2b5c; font-size: 13.500px; line-height: 20px; }
```
